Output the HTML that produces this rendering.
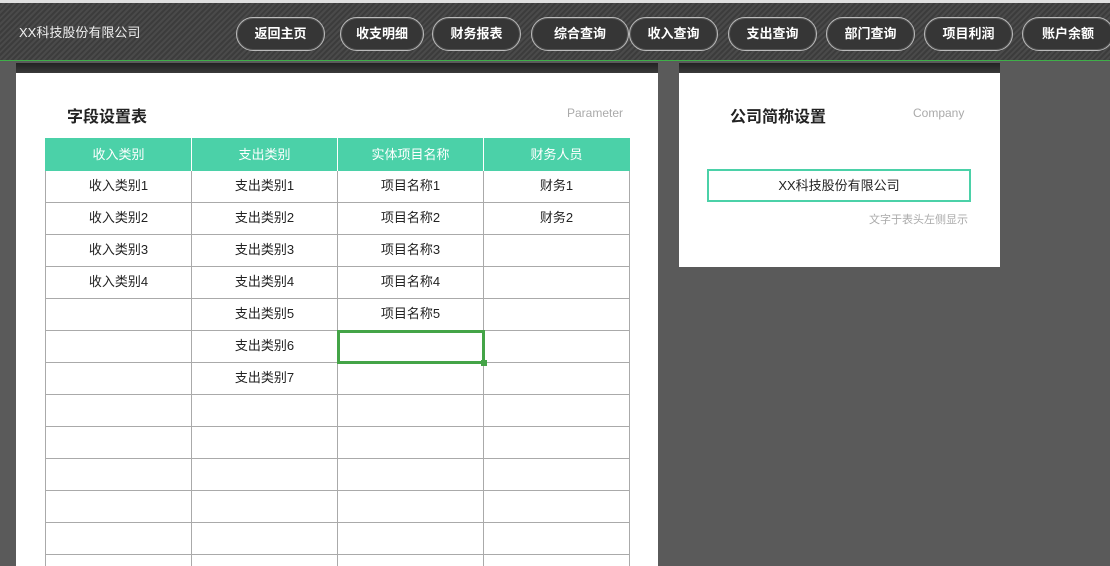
<!DOCTYPE html>
<html style="width:1110px;height:566px;overflow:hidden"><head><meta charset="utf-8"><style>
*{margin:0;padding:0;box-sizing:border-box}
body{width:1110px;height:566px;overflow:hidden;background:#5a5a5a;font-family:"Liberation Sans","Noto Sans CJK SC",sans-serif;position:relative}
.top{position:absolute;left:0;top:0;width:1110px;height:3px;background:#e0e0e0}
.hdr{position:absolute;left:0;top:3px;width:1110px;height:58px;background:repeating-linear-gradient(135deg,#3c3c3c 0 2px,#4a4a4a 2px 4px);border-bottom:1px solid #3fae49}
.logo{position:absolute;left:19px;top:19px;color:#f0f0f0;font-size:13px}
.btn{position:absolute;top:17px;height:34px;border:1px solid #bbb;border-radius:17px;background:#363636;color:#fff;font-size:13px;font-weight:bold;text-align:center;line-height:32px;box-shadow:inset 0 0 0 1px #555}
.panel{position:absolute;background:#fff;overflow:hidden}
.bar{position:absolute;left:0;top:0;width:100%;height:10px;background:linear-gradient(#222,#3a3a3a)}
.title{position:absolute;font-size:16px;font-weight:bold;color:#222}
.sub{position:absolute;font-size:12px;color:#aaa}
.cell{position:absolute;width:146px;height:32px;border-right:1px solid #aaa;border-bottom:1px solid #aaa;text-align:center;line-height:30px;font-size:13px;color:#222}
.h{background:#4bd1a8;color:#fff;border-right:1px solid #fff;border-bottom:none;height:33px;line-height:33px}
</style></head><body>
<div class="top"></div>
<div class="hdr">
<div class="logo">XX科技股份有限公司</div>
</div>
<div class="btn" style="left:236px;width:89px">返回主页</div>
<div class="btn" style="left:340px;width:84px">收支明细</div>
<div class="btn" style="left:432px;width:89px">财务报表</div>
<div class="btn" style="left:531px;width:98px">综合查询</div>
<div class="btn" style="left:629px;width:89px">收入查询</div>
<div class="btn" style="left:728px;width:89px">支出查询</div>
<div class="btn" style="left:826px;width:89px">部门查询</div>
<div class="btn" style="left:924px;width:89px">项目利润</div>
<div class="btn" style="left:1022px;width:92px">账户余额</div>

<div class="panel" style="left:16px;top:63px;width:642px;height:503px">
<div class="bar"></div>
<div class="title" style="left:51px;top:40px">字段设置表</div>
<div class="sub" style="left:551px;top:43px">Parameter</div>
</div>
<div class="panel" style="left:679px;top:63px;width:321px;height:204px">
<div class="bar"></div>
<div class="title" style="left:51px;top:40px">公司简称设置</div>
<div class="sub" style="left:234px;top:43px">Company</div>
<div style="position:absolute;left:28px;top:106px;width:264px;height:33px;border:2px solid #4bd1a8;text-align:center;line-height:29px;font-size:13px;color:#222">XX科技股份有限公司</div>
<div style="position:absolute;right:32px;top:148px;font-size:11px;color:#aaa">文字于表头左侧显示</div>
</div>

<div id="t" style="position:absolute;left:45px;top:138px;width:586px;height:428px;overflow:hidden"></div>
<div style="position:absolute;left:337px;top:330px;width:148px;height:34px;border:3px solid #44a447"></div>
<div style="position:absolute;left:481px;top:360px;width:6px;height:6px;background:#44a447"></div>
<script>
var t=document.getElementById('t');
var hd=['收入类别','支出类别','实体项目名称','财务人员'];
var d=[['收入类别1','收入类别2','收入类别3','收入类别4'],['支出类别1','支出类别2','支出类别3','支出类别4','支出类别5','支出类别6','支出类别7'],['项目名称1','项目名称2','项目名称3','项目名称4','项目名称5'],['财务1','财务2']];
var h='';
for(var c=0;c<4;c++){
var L=c==0?0:c*146+1, W=c==0?147:146, bl=c==0?'border-left:1px solid #aaa;':'';
h+='<div class="cell h" style="left:'+L+'px;top:0;width:'+W+'px;'+(c==0?'border-left:1px solid #4bd1a8;':'')+(c==3?'border-right-color:#4bd1a8;':'')+'">'+hd[c]+'</div>';
for(var r=0;r<13;r++){h+='<div class="cell" style="left:'+L+'px;top:'+(33+r*32)+'px;width:'+W+'px;'+bl+'">'+(d[c][r]||'')+'</div>';}
}
t.innerHTML=h;
</script>
</body></html>
